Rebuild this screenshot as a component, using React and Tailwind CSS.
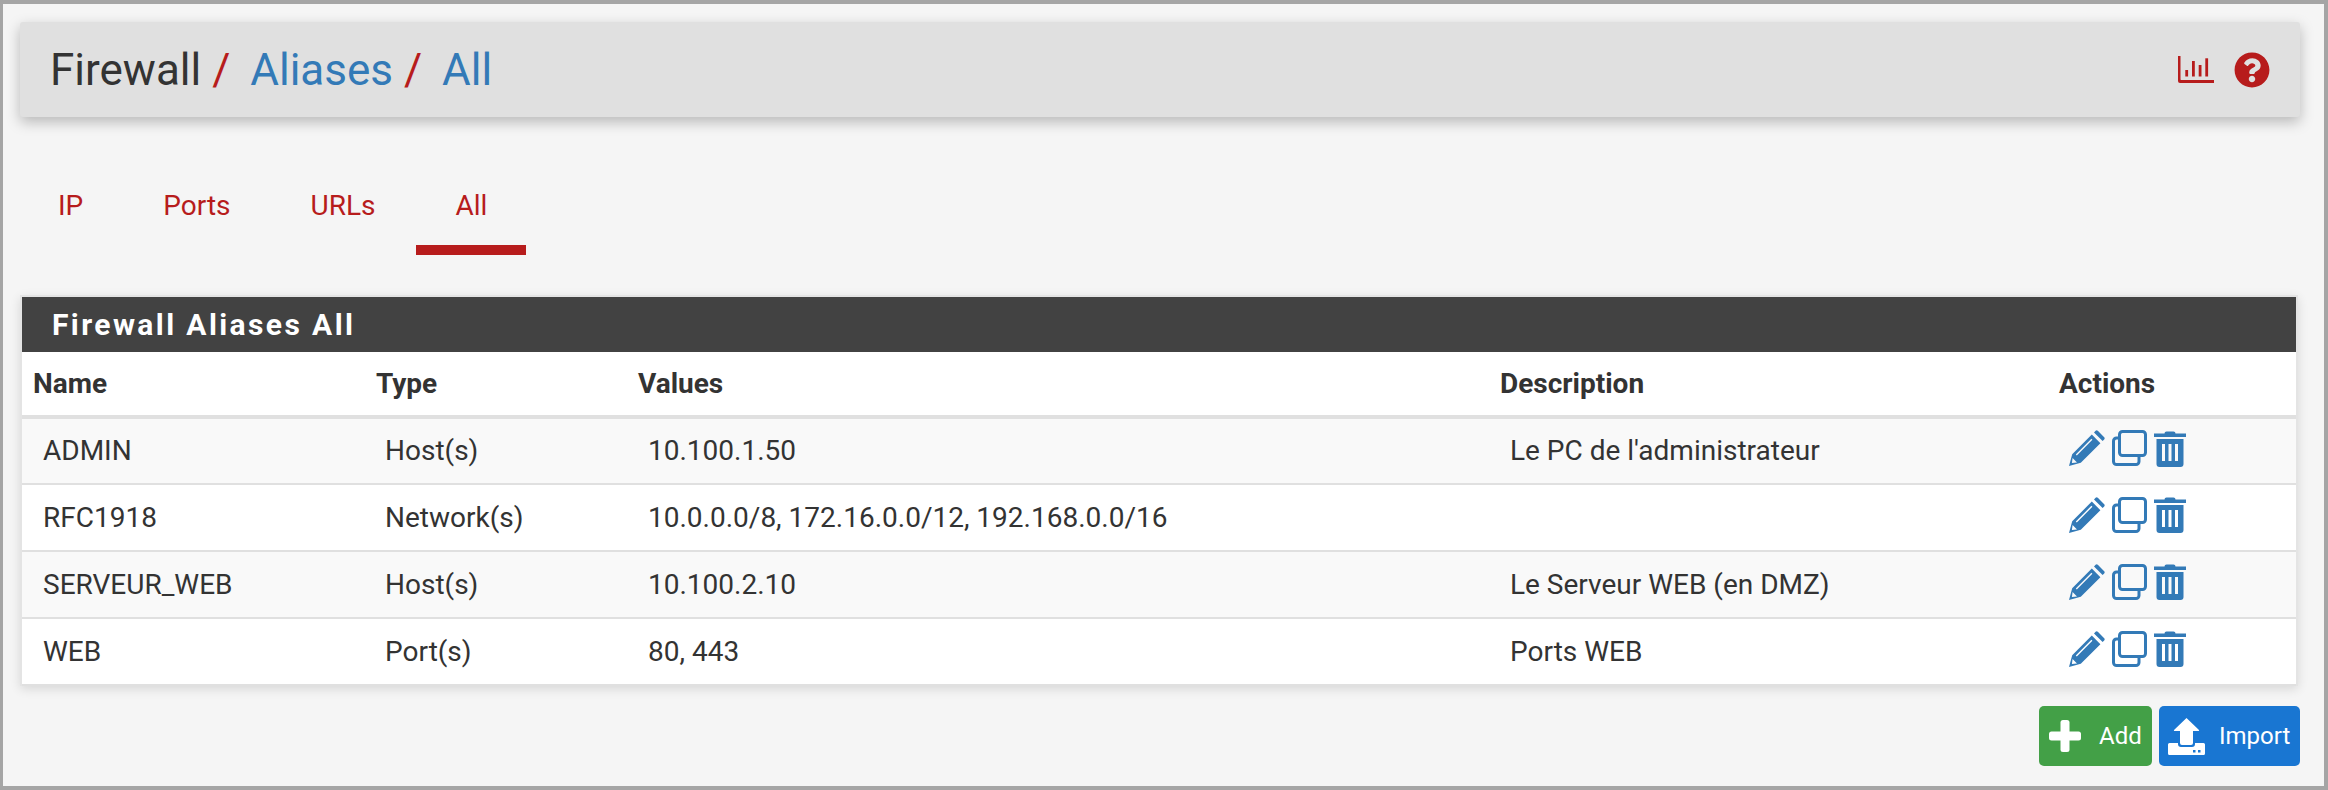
import React from 'react';
import { FaQuestionCircle } from 'react-icons/fa';

const rows = [
  { name: 'ADMIN', type: 'Host(s)', values: '10.100.1.50', desc: "Le PC de l'administrateur" },
  { name: 'RFC1918', type: 'Network(s)', values: '10.0.0.0/8, 172.16.0.0/12, 192.168.0.0/16', desc: '' },
  { name: 'SERVEUR_WEB', type: 'Host(s)', values: '10.100.2.10', desc: 'Le Serveur WEB (en DMZ)' },
  { name: 'WEB', type: 'Port(s)', values: '80, 443', desc: 'Ports WEB' },
];

function ChartIcon() {
  return (
    <svg width="36" height="27" viewBox="0 0 36 27" className="text-[#b71c1c]" fill="currentColor">
      <path d="M0 0h2.5v23.5c0 .3.2.5.5.5h33v3H2a2 2 0 0 1-2-2z" />
      <rect x="7.3" y="14" width="2.8" height="6.5" />
      <rect x="14" y="5" width="2.8" height="15.5" />
      <rect x="20.7" y="9" width="2.8" height="11.5" />
      <rect x="27.3" y="2.3" width="2.8" height="18.2" />
    </svg>
  );
}

function PencilIcon() {
  return (
    <svg width="36" height="36" viewBox="0 0 36 36" fill="currentColor">
      <path fillRule="evenodd" d="M0 36 L3.2 24.2 L22.8 4.6 L31.4 13.2 L11.8 32.8 Z M3.6 28 L2.9 33.1 L8 32.4 Z M6.8 24.4 L7.8 25.4 L23.4 9.8 L22.4 8.8 Z" />
      <path d="M25 2.4 L26.6 .8 Q27.6 -.2 28.8 .8 L35.2 7.2 Q36.2 8.4 35.2 9.4 L33.6 11 Z" />
    </svg>
  );
}

function CloneIcon() {
  return (
    <svg width="35" height="36" viewBox="0 0 35 36" fill="none" stroke="currentColor" strokeWidth="3">
      <rect x="7.5" y="1.5" width="26" height="24" rx="3" />
      <path d="M7 8 H4.5 a3 3 0 0 0 -3 3 V31.5 a3 3 0 0 0 3 3 H24 a3 3 0 0 0 3 -3 V26" />
    </svg>
  );
}

function TrashIcon() {
  return (
    <svg width="32" height="37" viewBox="0 0 32 37" fill="currentColor">
      <path d="M0 3.5h10.5a2 2 0 0 1 2-2h7a2 2 0 0 1 2 2H32V7H0z" />
      <path fillRule="evenodd" d="M2.5 9h27v25a3 3 0 0 1-3 3h-21a3 3 0 0 1-3-3z M8 14v17h3V14z M14.5 14v17h3V14z M21 14v17h3V14z" />
    </svg>
  );
}

function PlusIcon() {
  return (
    <svg width="32" height="32" viewBox="0 0 32 32" fill="currentColor">
      <rect x="11.5" y="0" width="9" height="32" rx="2.5" />
      <rect x="0" y="11.5" width="32" height="9" rx="2.5" />
    </svg>
  );
}

function UploadIcon() {
  return (
    <svg width="37" height="37" viewBox="0 0 37 37" fill="currentColor">
      <path d="M18.5 0 L31 12 Q31.5 13 30.5 13 H25 V25 Q25 27 23 27 H14 Q12 27 12 25 V13 H6.5 Q5.5 13 6 12 Z" />
      <path fillRule="evenodd" d="M1.5 25 H10 V26 Q10 29 13 29 H24 Q27 29 27 26 V25 H35.5 Q37 25 37 26.5 V35.5 Q37 37 35.5 37 H1.5 Q0 37 0 35.5 V26.5 Q0 25 1.5 25 Z M25 32 v2.5 h2.5 v-2.5 z M30 32 v2.5 h2.5 v-2.5 z" />
    </svg>
  );
}

function App() {
  return (
    <div className="h-[790px] bg-[#f5f5f5] border-[#a5a5a5] border-t-4 border-b-4 border-l-[3px] border-r-4 font-['Roboto',sans-serif] text-[#333] overflow-hidden">
      {/* Breadcrumb bar */}
      <div className="ml-[17px] mr-[24px] mt-[18px] h-[95px] bg-[#e0e0e0] rounded-[3px] shadow-[0_5px_14px_rgba(0,0,0,0.25)] flex items-center justify-between pl-[30px] pr-[30px]">
        <div className="text-[44px] leading-none whitespace-pre">
          <span>Firewall</span>
          <span className="text-[#b71c1c]"> / </span>
          <span className="text-[#337ab7] ml-[9px]">Aliases</span>
          <span className="text-[#b71c1c]"> / </span>
          <span className="text-[#337ab7] ml-[9px]">All</span>
        </div>
        <div className="flex items-center gap-[20px]">
          <ChartIcon />
          <FaQuestionCircle size={36} className="text-[#b71c1c]" />
        </div>
      </div>

      {/* Tabs */}
      <div className="flex gap-[2px] ml-[16px] mt-[40px] text-[28px] text-[#b71c1c]">
        <div className="px-[39px] h-[98px] pt-[31px] leading-[36px]">IP</div>
        <div className="px-[39px] h-[98px] pt-[31px] leading-[36px]">Ports</div>
        <div className="px-[39px] h-[98px] pt-[31px] leading-[36px]">URLs</div>
        <div className="px-[39px] h-[98px] pt-[31px] leading-[36px] border-b-[10px] border-[#b71c1c]">All</div>
      </div>

      {/* Aliases panel */}
      <div className="ml-[17px] mr-[26px] mt-[40px] border-2 border-[#e4e4e4] border-b-0 bg-white shadow-[0_3px_10px_rgba(0,0,0,0.12)]">
        <div className="h-[55px] bg-[#424242] text-white text-[30px] font-bold tracking-[2.4px] pl-[30px] flex items-center">
          Firewall Aliases All
        </div>
        <table className="w-full table-fixed border-collapse text-[28px]">
          <colgroup>
            <col className="w-[343px]" />
            <col className="w-[262px]" />
            <col className="w-[862px]" />
            <col className="w-[559px]" />
            <col />
          </colgroup>
          <thead>
            <tr className="h-[65px] border-b-4 border-[#e0e0e0] text-left font-bold">
              <th className="pl-[11px]">Name</th>
              <th className="pl-[11px]">Type</th>
              <th className="pl-[11px]">Values</th>
              <th className="pl-[11px]">Description</th>
              <th className="pl-[11px]">Actions</th>
            </tr>
          </thead>
          <tbody>
            {rows.map((row, i) => (
              <tr key={row.name} className={`h-[67px] border-b-2 border-[#e0e0e0] ${i % 2 === 0 ? 'bg-[#f9f9f9]' : 'bg-white'}`}>
                <td className="pl-[21px]">{row.name}</td>
                <td className="pl-[20px]">{row.type}</td>
                <td className="pl-[21px]">{row.values}</td>
                <td className="pl-[21px]">{row.desc}</td>
                <td className="pl-[21px]">
                  <div className="flex items-center gap-[7px] pb-[6px] text-[#337ab7]">
                    <PencilIcon />
                    <CloneIcon />
                    <TrashIcon />
                  </div>
                </td>
              </tr>
            ))}
          </tbody>
        </table>
      </div>

      {/* Buttons */}
      <div className="flex justify-end gap-[7px] mr-[24px] mt-[20px] text-white text-[24px]">
        <button className="w-[113px] h-[60px] rounded-[5px] bg-[#43a047] flex items-center pl-[10px] gap-[18px]">
          <PlusIcon />
          <span className="font-normal">Add</span>
        </button>
        <button className="w-[141px] h-[60px] rounded-[5px] bg-[#1976d2] flex items-center pl-[9px] gap-[14px]">
          <UploadIcon />
          <span className="font-normal">Import</span>
        </button>
      </div>
    </div>
  );
}

export default App;
